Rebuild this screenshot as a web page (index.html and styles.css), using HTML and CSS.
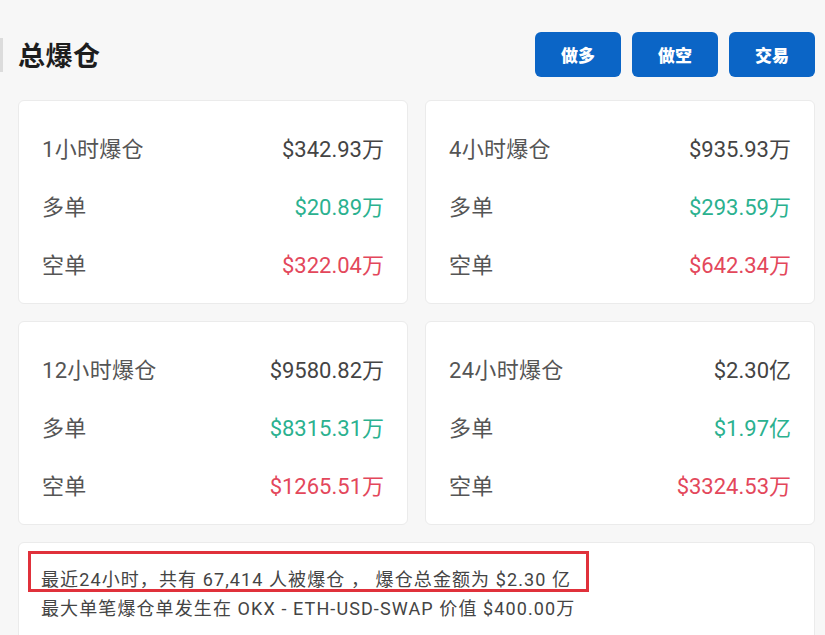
FILE: index.html
```html
<!DOCTYPE html>
<html lang="zh-CN">
<head>
  <meta charset="UTF-8">
  <title>总爆仓</title>
  <link rel="stylesheet" href="styles.css">
</head>
<body>

  <div class="edge"></div>

  <div class="page">
    <!-- HEADER -->
    <div class="head">
      <h1>总爆仓</h1>
      <div class="actions">
        <button>做多</button>
        <button>做空</button>
        <button>交易</button>
      </div>
    </div>

    <!-- PERIOD CARDS -->
    <div class="grid">
      <div class="card">
        <div class="row"><span class="lbl">1小时爆仓</span><span class="val">$342.93万</span></div>
        <div class="row"><span class="lbl">多单</span><span class="val up">$20.89万</span></div>
        <div class="row"><span class="lbl">空单</span><span class="val down">$322.04万</span></div>
      </div>
      <div class="card">
        <div class="row"><span class="lbl">4小时爆仓</span><span class="val">$935.93万</span></div>
        <div class="row"><span class="lbl">多单</span><span class="val up">$293.59万</span></div>
        <div class="row"><span class="lbl">空单</span><span class="val down">$642.34万</span></div>
      </div>
      <div class="card">
        <div class="row"><span class="lbl">12小时爆仓</span><span class="val">$9580.82万</span></div>
        <div class="row"><span class="lbl">多单</span><span class="val up">$8315.31万</span></div>
        <div class="row"><span class="lbl">空单</span><span class="val down">$1265.51万</span></div>
      </div>
      <div class="card">
        <div class="row"><span class="lbl">24小时爆仓</span><span class="val">$2.30亿</span></div>
        <div class="row"><span class="lbl">多单</span><span class="val up">$1.97亿</span></div>
        <div class="row"><span class="lbl">空单</span><span class="val down">$3324.53万</span></div>
      </div>
    </div>

    <!-- SUMMARY -->
    <div class="summary">
      <div class="mark"></div>
      <p>最近24小时，共有 67,414 人被爆仓 ， 爆仓总金额为 $2.30 亿</p>
      <p>最大单笔爆仓单发生在 OKX - ETH-USD-SWAP 价值 $400.00万</p>
    </div>
  </div>

</body>
</html>
```

FILE: styles.css
```css
body { margin:0; background:#f7f7f7; color:#333;
       font-family:Roboto,'Noto Sans CJK SC',sans-serif; overflow:hidden; }

.edge { position:absolute; left:0; top:38px; width:3px; height:34px;
        background:#dcdcdc; }

.page { padding:32px 10px 0 18px; }

/* Header */
.head { display:flex; align-items:center; justify-content:space-between;
        height:45px; margin-bottom:23px; }
h1 { margin:0; font-size:27px; font-weight:700; color:#1d1d1d; letter-spacing:0.5px; }
.actions { display:flex; gap:11px; }
.actions button {
  width:86px; height:45px; border:none; border-radius:6px;
  background:#0b65c6; color:#fff; font-size:17px; font-weight:900;
  font-family:'Noto Sans CJK SC',sans-serif; cursor:pointer;
}

/* Cards */
.grid { display:grid; grid-template-columns:1fr 1fr; gap:17px; }
.card {
  background:#fff; border:1px solid #ebebeb; border-radius:6px;
  padding:25px 23px 19px;
  display:flex; flex-direction:column; gap:16px;
}
.row { display:flex; justify-content:space-between; align-items:center;
       height:42px; font-size:22px; }
.lbl { color:#555; letter-spacing:0.3px; }
.val { color:#444; }
.up { color:#2bb18f; }
.down { color:#e3475b; }

/* Summary */
.summary {
  position:relative; margin-top:17px;
  background:#fff; border:1px solid #ebebeb; border-radius:6px;
  padding:22px 22px 20px; height:120px; box-sizing:border-box;
}
.summary p { margin:0; font-size:18px; line-height:29px; color:#444;
             letter-spacing:1.1px; white-space:nowrap; }
.mark { position:absolute; left:9px; top:8px; width:555px; height:35px;
        border:3px solid #e0313b; }
```
